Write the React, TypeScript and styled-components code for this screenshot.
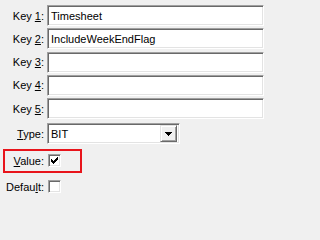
import styled, { createGlobalStyle } from 'styled-components'

const GlobalStyle = createGlobalStyle`
  html, body {
    margin: 0;
    padding: 0;
    background: #f0f0f0;
  }
  body {
    font-family: "Liberation Sans", Arial, sans-serif;
    font-size: 11px;
    color: #000;
  }
`

const keys = [
  { n: '1', value: 'Timesheet' },
  { n: '2', value: 'IncludeWeekEndFlag' },
  { n: '3', value: '' },
  { n: '4', value: '' },
  { n: '5', value: '' },
]

// classic 7x7 check mark, one string per pixel row
const checkRows = [
  '......#',
  '.....##',
  '#...###',
  '##.###.',
  '#####..',
  '.###...',
  '..#....',
]

const CheckMark = () => (
  <svg width="7" height="7" viewBox="0 0 7 7" shapeRendering="crispEdges">
    {checkRows.map((row, y) =>
      row.split('').map((c, x) =>
        c === '#' ? <rect key={`${x}-${y}`} x={x} y={y} width="1" height="1" fill="#000" /> : null,
      ),
    )}
  </svg>
)

const App = () => {
  return (
    <Form>
      <GlobalStyle />
      <KeyList>
        {keys.map((k) => (
          <Row key={k.n}>
            <Label>
              Key <u>{k.n}</u>:
            </Label>
            <TextBox>{k.value}</TextBox>
          </Row>
        ))}
      </KeyList>
      <Row $top={4}>
        <Label>
          <u>T</u>ype:
        </Label>
        <Combo>
          <ComboText>BIT</ComboText>
          <ComboButton>
            <svg width="7" height="4" viewBox="0 0 7 4" shapeRendering="crispEdges">
              <path d="M0 0h7v1H6v1H5v1H4v1H3V3H2V2H1V1H0z" fill="#000" />
            </svg>
          </ComboButton>
        </Combo>
      </Row>
      <Row $top={10} $height={13}>
        <Highlight />
        <Label>
          <u>V</u>alue:
        </Label>
        <CheckBox>
          <CheckMark />
        </CheckBox>
      </Row>
      <Row $top={13} $height={13}>
        <Label>
          Defau<u>l</u>t:
        </Label>
        <CheckBox />
      </Row>
    </Form>
  )
}

export default App

const Form = styled.div`
  display: flex;
  flex-direction: column;
  width: 271px;
  height: 200px;
  padding: 5px 7px 0 0;
  box-sizing: border-box;
`

const KeyList = styled.div`
  display: flex;
  flex-direction: column;
  gap: 2.25px;
`

const Row = styled.div<{ $top?: number; $height?: number }>`
  position: relative;
  display: flex;
  align-items: center;
  gap: 3px;
  height: ${({ $height }) => $height ?? 21}px;
  margin-top: ${({ $top }) => $top ?? 0}px;
`

const Label = styled.div`
  width: 44px;
  flex: none;
  text-align: right;
  white-space: nowrap;

  u {
    text-underline-offset: 1px;
  }
`

const sunken = `
  box-sizing: border-box;
  border-style: solid;
  border-width: 1px;
  border-color: #a0a0a0 #ffffff #ffffff #a0a0a0;
  box-shadow: inset 1px 1px 0 #696969, inset -1px -1px 0 #e3e3e3;
  background: #fff;
`

const TextBox = styled.div`
  ${sunken}
  flex: 1;
  height: 21px;
  padding: 0 3px;
  display: flex;
  align-items: center;
  white-space: nowrap;
  overflow: hidden;
`

const Combo = styled.div`
  ${sunken}
  width: 133px;
  height: 21px;
  padding: 2px;
  display: flex;
  align-items: center;
`

const ComboText = styled.div`
  flex: 1;
  padding-left: 1px;
`

const ComboButton = styled.div`
  box-sizing: border-box;
  width: 17px;
  height: 17px;
  background: #f0f0f0;
  border-style: solid;
  border-width: 1px;
  border-color: #e3e3e3 #696969 #696969 #e3e3e3;
  box-shadow: inset 1px 1px 0 #ffffff, inset -1px -1px 0 #a0a0a0;
  display: flex;
  align-items: center;
  justify-content: center;
`

const CheckBox = styled.div`
  ${sunken}
  width: 13px;
  height: 13px;
  margin-left: 1px;
  display: flex;
  align-items: center;
  justify-content: center;
`

const Highlight = styled.div`
  position: absolute;
  left: 3px;
  top: -5px;
  width: 79px;
  height: 24px;
  box-sizing: border-box;
  border: 2px solid #e8141b;
  pointer-events: none;
`
